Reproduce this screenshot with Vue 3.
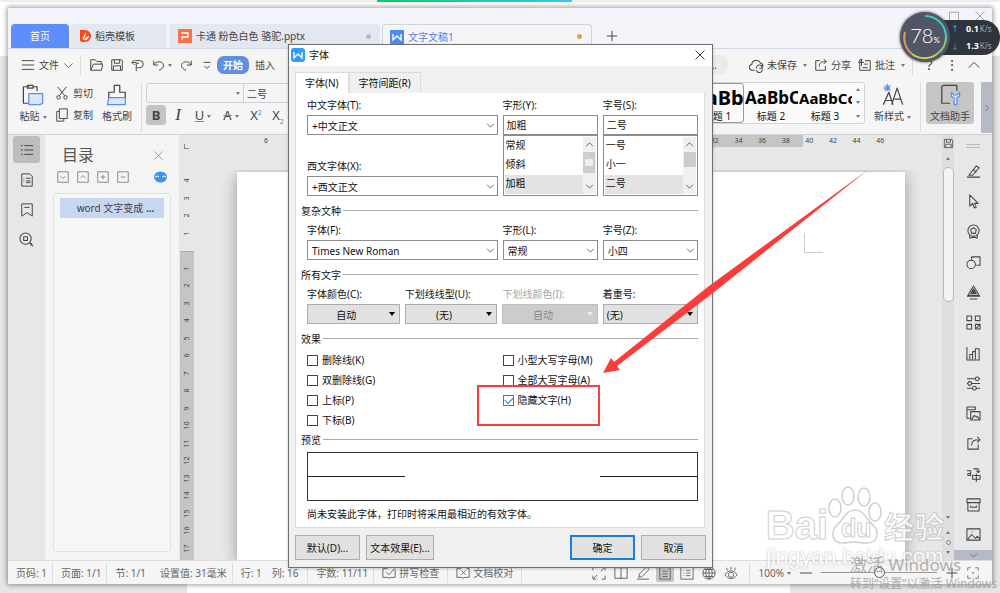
<template>
  <div class="desktop">
    <div class="progress"></div>
    <div class="app-window">
      <!-- Document tabs -->
      <header class="tab-bar">
        <button class="tab home">首页</button>
        <button class="tab docer">
          <svg width="11" height="14" viewBox="0 0 11 14"><path d="M0 1h5a6 6 0 0 1 0 12H2a2 2 0 0 1-2-2z" fill="#f8481c"/><path d="M3 11c-1-3 1-4 3-8 0 3-1 5-3 8zm1 0c2 1 5-1 5-4-2 0-4 2-5 4z" fill="#fff"/></svg>
          <span>稻壳模板</span>
        </button>
        <button class="tab ppt">
          <svg width="14" height="14" viewBox="0 0 14 14"><path d="M0 0h14v14H0z" fill="#fa7049"/><path d="M3 4h7v4H4v3" fill="none" stroke="#fff" stroke-width="1.3"/></svg>
          <span>卡通 粉色白色 骆驼.pptx</span>
          <i class="dot"></i>
        </button>
        <button class="tab current">
          <svg width="14" height="14" viewBox="0 0 14 14"><path d="M0 0h14v14H0z" fill="#4c8cf0"/><path d="M3 4v6l4-4 4 4V4" fill="none" stroke="#fff" stroke-width="1.3"/></svg>
          <span>文字文稿1</span>
          <i class="dot orange"></i>
        </button>
        <button class="new-tab" aria-label="新建"><Icon name="plus" :size="14" /></button>
        <div class="window-controls">
          <button aria-label="最大化"><Icon name="square" :size="12" /></button>
          <button aria-label="关闭"><Icon name="close" :size="12" /></button>
        </div>
      </header>

      <!-- Menu -->
      <nav class="menu-bar">
        <button class="file"><Icon name="menu" :size="14" /><span>文件</span><Icon name="down" :size="11" /></button>
        <span class="line"></span>
        <div class="quick">
          <button v-for="name in quick" :key="name" :aria-label="name"><Icon :name="name" :size="14" /><i v-if="name === 'undo'" class="caret"></i></button>
        </div>
        <button class="active-menu">开始</button>
        <button>插入</button>
        <div class="menu-right">
          <button class="search">汇...</button>
          <button><Icon name="cloud" :size="15" />未保存<i class="caret"></i></button>
          <button><Icon name="share" :size="14" />分享</button>
          <button><Icon name="note" :size="14" />批注<i class="caret"></i></button>
          <span class="line"></span>
          <button class="mark">?</button>
          <button class="mark">⋮</button>
          <button class="mark"><Icon name="up" :size="14" /></button>
        </div>
      </nav>

      <!-- Ribbon -->
      <section class="ribbon">
        <button class="big paste"><Icon name="paste" :size="22" /><span>粘贴<i class="caret"></i></span></button>
        <div class="stack">
          <button><Icon name="cut" :size="14" />剪切</button>
          <button><Icon name="copy" :size="14" />复制</button>
        </div>
        <button class="big brush"><Icon name="brush" :size="22" /><span>格式刷</span></button>
        <span class="line tall"></span>
        <div class="font-tools">
          <div class="font-boxes">
            <select class="font-name" aria-label="字体"><option></option></select>
            <i class="caret"></i>
            <select class="font-size" aria-label="字号"><option>二号</option></select>
          </div>
          <div class="format">
            <button class="on"><b>B</b></button>
            <button><em>I</em></button>
            <button class="with-caret"><u>U</u><i class="caret"></i></button>
            <button class="with-caret"><s>A</s><i class="caret"></i></button>
            <button>X<sup>2</sup></button>
            <button>X<sub>2</sub></button>
          </div>
        </div>
        <div class="ribbon-right">
          <div class="gallery">
            <button v-for="(s, i) in styles" :key="s.name" :class="['style', s.size, { chosen: i === 0 }]">
              <strong>{{ s.sample }}</strong><span>{{ s.name }}</span>
            </button>
            <div class="gallery-scroll"><i class="caret flip"></i><i class="caret"></i><i class="caret more"></i></div>
          </div>
          <button class="big new-style"><Icon name="letters" :size="22" /><span>新样式<i class="caret"></i></span></button>
          <span class="line tall"></span>
          <button class="big helper"><Icon name="helper" :size="22" /><span>文档助手</span></button>
          <button class="strip" aria-label="更多"><Icon name="right" :size="8" /></button>
        </div>
      </section>

      <!-- Workspace -->
      <main class="workspace">
        <aside class="side">
          <button class="on" aria-label="目录"><Icon name="list" :size="14" /></button>
          <button aria-label="章节"><Icon name="doc" :size="14" /></button>
          <button aria-label="书签"><Icon name="bookmark" :size="14" /></button>
          <button aria-label="查找"><Icon name="find" :size="15" /></button>
        </aside>
        <aside class="outline">
          <div class="outline-head"><h2>目录</h2><button aria-label="关闭目录"><Icon name="close" :size="11" /></button></div>
          <div class="outline-tools">
            <button v-for="n in ['boxDown', 'boxUp', 'boxPlus', 'boxMinus']" :key="n" :aria-label="n"><Icon :name="n" :size="12" /></button>
            <svg class="smart" width="13" height="12" viewBox="0 0 13 12"><ellipse cx="6.500" cy="6" rx="6.500" ry="5.500" fill="#3d93f0"/><path d="M1 6l2-1 2 1M8 6l2-1 2 1" fill="none" stroke="#fff"/></svg>
          </div>
          <div class="outline-list"><button>word 文字变成 <b>...</b></button></div>
        </aside>
        <div class="v-ruler">
          <span class="corner"></span>
          <div class="v-top"><span v-for="n in [4, 3, 2, 1]" :key="n">{{ n }}</span></div>
          <div class="v-main"><span v-for="n in 17" :key="n">{{ n }}</span></div>
        </div>
        <div class="canvas">
          <div class="h-ruler">
            <span class="first">6</span>
            <div class="h-numbers"><span v-for="n in [32, 34, 36, 38, 40, 42, 44, 46]" :key="n">{{ n }}</span></div>
          </div>
          <div class="page"><i class="page-corner"></i></div>
        </div>
        <div class="scroll">
          <Icon name="save" :size="11" />
          <i class="caret flip"></i>
          <div class="thumb"></div>
          <div class="scroll-end"><i class="caret"></i><i class="caret flip"></i><i class="ring"></i><i class="caret"></i></div>
        </div>
        <aside class="rail">
          <i class="grip"></i>
          <button v-for="n in rail" :key="n" :aria-label="n"><Icon :name="n" :size="15" /></button>
          <button class="rail-more" aria-label="展开"><Icon name="down" :size="9" /></button>
        </aside>
      </main>

      <!-- Status -->
      <footer class="status">
        <span class="cell">页码: 1</span>
        <span class="cell">页面: 1/1</span>
        <span class="cell wide"><span>节: 1/1</span><span>设置值: 31毫米</span></span>
        <span class="cell cursor"><span>行: 1</span><span>列: 16</span></span>
        <span class="cell">字数: 11/11</span>
        <button class="cell"><Icon name="spell" :size="14" />拼写检查</button>
        <button class="cell"><Icon name="proof" :size="14" />文档校对</button>
        <div class="status-right">
          <button v-for="n in views" :key="n" :class="['view', { on: n === 'pageView' }]" :aria-label="n"><Icon :name="n" :size="14" /></button>
          <span class="line"></span>
          <button class="zoom">100%<i class="caret"></i></button>
          <button class="step" aria-label="缩小"><Icon name="minus" :size="14" /></button>
          <input type="range" min="0" max="100" value="50" aria-label="缩放">
          <button class="step" aria-label="放大"><Icon name="plus" :size="14" /></button>
          <button class="fit" aria-label="适应"><Icon name="fit" :size="12" /></button>
        </div>
      </footer>
    </div>

    <!-- Font dialog -->
    <form class="dialog" role="dialog" aria-label="字体" @submit.prevent>
      <div class="dialog-title">
        <svg width="14" height="14" viewBox="0 0 14 14"><rect width="14" height="14" rx="3" fill="#2f9cfb"/><path d="M3 4v6l4-4 4 4V4" fill="none" stroke="#fff" stroke-width="1.300"/></svg>
        <span>字体</span>
        <button type="button" aria-label="关闭"><Icon name="close" :size="12" /></button>
      </div>
      <div class="dialog-tabs">
        <button type="button" class="on">字体(N)</button>
        <button type="button">字符间距(R)</button>
      </div>
      <div class="panel">
        <div class="columns">
          <div class="families">
            <label for="cn">中文字体(T):</label>
            <div class="pick"><select id="cn"><option>+中文正文</option></select><Icon name="down" :size="9" /></div>
            <label for="en" class="second">西文字体(X):</label>
            <div class="pick"><select id="en"><option>+西文正文</option></select><Icon name="down" :size="9" /></div>
          </div>
          <div v-for="l in lists" :key="l.id">
            <label :for="l.id">{{ l.label }}</label>
            <input :id="l.id" v-model="l.value" type="text">
            <div class="list">
              <select v-model="l.value" size="3" :aria-label="l.label">
                <option v-for="o in l.options" :key="o" :value="o" :class="{ picked: o === l.value }">{{ o }}</option>
              </select>
              <div class="list-scroll"><Icon name="up" :size="9" /><i :class="l.id"></i><Icon name="down" :size="9" /></div>
            </div>
          </div>
        </div>

        <h3>复杂文种</h3>
        <div class="columns">
          <div v-for="c in complex" :key="c.id">
            <label :for="c.id">{{ c.label }}</label>
            <div class="pick"><select :id="c.id"><option>{{ c.value }}</option></select><Icon name="down" :size="9" /></div>
          </div>
        </div>

        <h3>所有文字</h3>
        <div class="columns four">
          <div v-for="a in allText" :key="a.id" :class="{ off: a.disabled }">
            <label :for="a.id">{{ a.label }}</label>
            <div class="pick gray">
              <select :id="a.id" :disabled="a.disabled" :class="{ left: a.left }"><option>{{ a.value }}</option></select>
              <i class="caret"></i>
            </div>
          </div>
        </div>

        <h3>效果</h3>
        <div class="effects">
          <div v-for="(col, i) in effects" :key="i">
            <label v-for="e in col" :key="e.label"><input v-model="e.on" type="checkbox">{{ e.label }}</label>
          </div>
        </div>

        <h3 class="preview-title">预览</h3>
        <div class="preview"><i></i><i></i></div>
        <p>尚未安装此字体，打印时将采用最相近的有效字体。</p>
      </div>
      <div class="dialog-foot">
        <button type="button">默认(D)...</button>
        <button type="button">文本效果(E)...</button>
        <button type="submit" class="ok">确定</button>
        <button type="button">取消</button>
      </div>
    </form>

    <!-- Annotations -->
    <div class="mark-box"></div>
    <svg class="arrow" width="268" height="206" viewBox="0 0 268 206">
      <path d="M1 205L9 190l3 4L107 118 267 1 111 125 15 198l3 4z" fill="#fb3c3a"/>
    </svg>

    <!-- Network monitor -->
    <div class="monitor">
      <div class="speeds">
        <span><i class="blue">↑</i><b>0.1</b>K/s</span>
        <span><i class="green">↓</i><b>1.3</b>K/s</span>
      </div>
      <div class="gauge">
        <svg width="50" height="50" viewBox="0 0 50 50" fill="none" stroke-width="2">
          <path d="M25 4a21 21 0 0 1 21 21" stroke="#45c8c0"/>
          <path d="M46 25a21 21 0 0 1-9 17" stroke="#84cf74"/>
          <path d="M37 42a21 21 0 0 1-25 0" stroke="#cfd04e"/>
          <path d="M12 42A21 21 0 0 1 5 20" stroke="#e09a4a"/>
        </svg>
        <span>78<small>%</small></span>
      </div>
    </div>

    <!-- Watermarks -->
    <div class="baidu">
      <div class="baidu-logo">
        <span>Bai</span>
        <svg width="56" height="58" viewBox="0 0 56 58" fill="#fff" stroke="#c4c4c4" stroke-width="1.500">
          <ellipse cx="7" cy="22" rx="6" ry="9"/><ellipse cx="20" cy="10" rx="6" ry="9"/><ellipse cx="36" cy="11" rx="6" ry="9"/><ellipse cx="47" cy="26" rx="6" ry="9"/>
          <path d="M27 24c9 0 11 9 18 15 8 8 4 18-6 18-6 0-8-1-13-1s-7 1-12 1C4 57 2 46 9 39c7-6 9-15 18-15z"/>
          <text x="13" y="51" font-family="Liberation Sans" font-size="25" font-weight="bold" stroke-width="1">du</text>
        </svg>
        <span class="cjk">经验</span>
      </div>
      <span class="baidu-url">jingyan.baidu.com</span>
    </div>
    <div class="activate"><span>激活 Windows</span><small>转到“设置”以激活 Windows</small></div>
  </div>
</template>

<script setup>
import { h, reactive } from 'vue'

const paths = {
  menu: 'M1 3h14M1 8h14M1 13h14',
  down: 'M2 5l6 6 6-6',
  up: 'M2 11l6-6 6 6',
  right: 'M5 2l6 6-6 6',
  close: 'M2 2l12 12M14 2L2 14',
  plus: 'M8 2v12M2 8h12',
  minus: 'M1 8h14',
  square: 'M2 3h12v11H2z',
  open: 'M2 14V2h5l2 2h5v3M2 14l3-7h11l-2 7z',
  save: 'M2 2h11l1 1v11H2zM5 2v4h6V2M4 14V9h8v5',
  output: 'M5 3h5a4 4 0 0 1 0 8H7M9 6H6v9M1 5h5M4 2l-3 3 3 3',
  undo: 'M2 3v5h5M2 8c3-6 12-4 11 1 0 2-2 4-5 5',
  redo: 'M14 3v5H9M14 8C11 2 2 4 3 9c0 2 2 4 5 5',
  more: 'M4 5h8M5 9l3 3 3-3',
  cloud: 'M6 13H4a3 3 0 0 1-1-6c0-5 7-6 9-2 3 1 3 3 3 4M8 11a3 3 0 0 1 6-1M14 8v3h-3M14 12a3 3 0 0 1-6 1',
  share: 'M7 3H2v11h11V9M6 10c0-5 3-6 8-6M11 1l3 3-3 3',
  note: 'M5 2H2v12h12V3H8M0 5h7M4 1v8M7 7h4M5 11h6',
  cut: 'M3 1l8 10M13 1L5 11M6 13a2 2 0 1 1-4 0 2 2 0 0 1 4 0M14 13a2 2 0 1 1-4 0 2 2 0 0 1 4 0',
  copy: 'M5 1h9v11H5zM5 4H2v11h8v-3',
  list: 'M5 3h10M5 8h10M5 13h10M1 3h2M1 8h2M1 13h2',
  doc: 'M2 1h9l3 3v11H2zM4 6h1M7 6h5M4 9h1M7 9h5M7 11h5',
  bookmark: 'M2 1h12v14l-6-4-6 4zM5 5h6',
  find: 'M13 7A6 6 0 1 1 1 7a6 6 0 0 1 12 0M11 11l4 4M5 5h4v4H5zM12 14l2-2',
  boxDown: 'M1 1h14v14H1zM5 7l3 3 3-3',
  boxUp: 'M1 1h14v14H1zM5 9l3-3 3 3',
  boxPlus: 'M1 1h14v14H1zM5 8h6M8 5v6',
  boxMinus: 'M1 1h14v14H1zM5 8h6',
  pen: 'M1 14h14M3 12l8-10 3 2-7 8zM8 6l3 3',
  pointer: 'M4 1v12l3-3 2 5 2-1-2-4h4z',
  badge: 'M14 7A6 6 0 1 1 2 7a6 6 0 0 1 12 0M8 4l3 2-1 4H6L5 6zM4 12v3l4-1 4 1v-3',
  shapes: 'M6 5V2h9v9h-4M10 10a4.500 4.500 0 1 1-9 0 4.500 4.500 0 0 1 9 0',
  warn: 'M8 1L2 11h12zM8 4l-3 5h6zM8 6l-1 2h2zM1 12h14M4 15h8',
  grid: 'M1 1h5v5H1zM10 1h5v5h-5zM1 10h5v5H1zM10 10h5v5h-5zM11 14l4-4',
  chart: 'M1 1v14h14M4 14v-5h3v5M7 9V6h3v8M10 6V3h4v11',
  sliders: 'M1 3h9M14 3h1M14 3a2 2 0 1 1-4 0 2 2 0 0 1 4 0M1 8h1M6 8h9M6 8a2 2 0 1 1-4 0 2 2 0 0 1 4 0M1 13h6M11 13h4M11 13a2 2 0 1 1-4 0 2 2 0 0 1 4 0',
  gallery: 'M4 13H1V1h9v3M1 4h9M5 6h10v9H5zM6 14l3-4 2 2 1-1 2 3',
  exportIcon: 'M7 3H2v11h11V9M6 10c0-5 3-6 8-6M12 1l3 3-3 3',
  translate: 'M1 4h4v5H2V7h3M8 2h5v4M11 4l2 2 2-2M7 9h8v4H7zM11 7v9',
  archive: 'M1 2h14v4H1zM2 6v9h12V6M5 9v2h6V9',
  picture: 'M1 2h14v12H1zM2 13l4-5 4 4 2-2 3 3M6 5h1',
  spell: 'M7 4L6 3H1v10h5l2 1 2-1h5V3M5 7l3 3 6-7',
  proof: 'M6 3H1v10h5l2 1 2-1h5V3h-3M6 5l5 5M11 5l-5 5',
  expand: 'M1 5V1h4M11 1h4v4M15 11v4h-4M5 15H1v-4M10 6l4-4M6 10l-4 4',
  book: 'M8 2H1v12h14V2zM8 2v13',
  edit: 'M1 15h14M3 13l1-4 8-8 3 3-8 8z',
  pageView: 'M2 1h9l3 3v11H2zM5 6h6M5 9h6M5 12h6',
  outlineView: 'M1 1h14v14H1zM4 5h1M7 5h5M4 8h1M7 8h5M4 11h1M7 11h5',
  web: 'M15 8A7 7 0 1 1 1 8a7 7 0 0 1 14 0M1 8h14M8 1v14M3 4h10M3 12h10M8 1c-5 4-5 10 0 14M8 1c5 4 5 10 0 14',
  eye: 'M1 10c4-6 10-6 14 0-4 6-10 6-14 0M11 10a3 3 0 1 1-6 0 3 3 0 0 1 6 0M8 1v3M3 2l1 3M13 2l-1 3',
  fit: 'M1 5V1h4M11 1h4v4M15 11v4h-4M5 15H1v-4M7 8h2M8 7v2'
}

// two-colour icons keep a dark part and a blue part
const toned = {
  paste: ['M5 2H1v12h4M11 5V2H8M4 1h4v2H4z', 'M5 7h10v7l-2 1H5z'],
  brush: ['M6 6V1h4v5h4v4H2V6z', 'M2 10h12v5H1z'],
  letters: ['M1 15l4-9 3 9M3 12h4M7 15l4-12 4 12M9 11h5', 'M4 0v5M1 3h5M2 1l4 4M6 1L2 5'],
  helper: ['M8 14H2V2l1-1h10v4', 'M9 6v3l2 1v5h2v-5l2-1V6l-2 2h-2z']
}

const Icon = (props) => {
  const parts = toned[props.name] ?? [paths[props.name]]
  return h('svg', {
    width: props.size,
    height: props.size,
    viewBox: '0 0 16 16',
    fill: 'none',
    stroke: 'currentColor',
    'stroke-width': props.size > 18 ? 0.9 : 1.1,
    'stroke-linejoin': 'round'
  }, parts.map((d, i) => h('path', i ? { d, stroke: '#5c8fe6', fill: props.name === 'letters' ? 'none' : '#dbe8fb' } : { d })))
}
Icon.props = ['name', 'size']

const quick = ['open', 'save', 'output', 'undo', 'redo', 'more']
const rail = ['pen', 'pointer', 'badge', 'shapes', 'warn', 'grid', 'chart', 'sliders', 'gallery', 'exportIcon', 'translate', 'archive', 'picture']
const views = ['expand', 'book', 'edit', 'pageView', 'outlineView', 'web', 'eye']
const styles = [
  { name: '标题 1', sample: 'AaBb', size: 'xl' },
  { name: '标题 2', sample: 'AaBbC', size: 'lg' },
  { name: '标题 3', sample: 'AaBbCc', size: 'md' }
]

const lists = reactive([
  { id: 'shape', label: '字形(Y):', value: '加粗', options: ['常规', '倾斜', '加粗'] },
  { id: 'points', label: '字号(S):', value: '二号', options: ['一号', '小一', '二号'] }
])
const complex = [
  { id: 'cf', label: '字体(F):', value: 'Times New Roman' },
  { id: 'cl', label: '字形(L):', value: '常规' },
  { id: 'cz', label: '字号(Z):', value: '小四' }
]
const allText = [
  { id: 'color', label: '字体颜色(C):', value: '自动' },
  { id: 'uline', label: '下划线线型(U):', value: '(无)' },
  { id: 'ucolor', label: '下划线颜色(I):', value: '自动', disabled: true },
  { id: 'dots', label: '着重号:', value: '(无)', left: true }
]
const effects = reactive([
  [
    { label: '删除线(K)', on: false },
    { label: '双删除线(G)', on: false },
    { label: '上标(P)', on: false },
    { label: '下标(B)', on: false }
  ],
  [
    { label: '小型大写字母(M)', on: false },
    { label: '全部大写字母(A)', on: false },
    { label: '隐藏文字(H)', on: true }
  ]
])
</script>

<style>
body {
  margin: 0;
}
</style>

<style scoped>
* {
  box-sizing: border-box;
}

.desktop {
  position: relative;
  display: flex;
  flex-direction: column;
  min-height: 100vh;
  padding: 8px 8px 9px;
  overflow: hidden;
  font-family: "Noto Sans", "Noto Sans CJK SC", sans-serif;
  font-size: 10px;
  line-height: 20px;
  color: #444;
  background:
    linear-gradient(#fff, #fff) 187px 100% / 603px 9px no-repeat,
    linear-gradient(#eee 2px, #fff 2px, #fff 56px, #e6e6e6 56px);
}

button, select, input {
  font: inherit;
  color: inherit;
  margin: 0;
  padding: 0;
  border: 0;
  background: none;
  border-radius: 0;
  white-space: nowrap;
}

select {
  appearance: none;
  outline: none;
}

svg {
  flex: none;
  display: block;
}

.progress {
  position: absolute;
  top: 0;
  left: 377px;
  width: 195px;
  height: 2px;
  background: linear-gradient(90deg, #0ccb62, #3cc3ee);
}

.app-window {
  flex: 1;
  display: flex;
  flex-direction: column;
  background: #f5f5f5;
  box-shadow: 0 0 5px 1px rgba(0, 0, 0, 0.4);
}

.caret {
  display: inline-block;
  border: 2px solid transparent;
  border-top: 3px solid #777;
  border-bottom: 0;
  margin-left: 3px;
  vertical-align: middle;
}

.caret.flip {
  transform: rotate(180deg);
}

.line {
  width: 1px;
  height: 20px;
  background: #ddd;
}

.line.tall {
  height: 50px;
}

/* Tabs */
.tab-bar {
  display: flex;
  align-items: flex-end;
  gap: 2px;
  height: 41px;
  padding-left: 3px;
  background: #f2f4f9;
  border-bottom: 1px solid #d0d9e6;
}

.tab {
  display: flex;
  align-items: center;
  gap: 4px;
  height: 24px;
  padding: 0 9px;
  border-radius: 4px 4px 0 0;
  background: #e2e7f0;
}

.tab.home {
  width: 58px;
  justify-content: center;
  background: #5f8dfa;
  color: #fff;
}

.tab.docer {
  width: 96px;
}

.tab.ppt {
  width: 211px;
}

.tab.current {
  width: 210px;
  padding: 0 9px 0 7px;
  border: 1px solid #ccd4e0;
  border-bottom: 0;
  background: #f5f5f7;
  color: #4b83e8;
}

.dot {
  width: 5px;
  height: 5px;
  margin-left: auto;
  border-radius: 50%;
  background: #b7bcc6;
}

.dot.orange {
  background: #e89a4d;
}

.new-tab {
  height: 24px;
  padding: 0 11px;
}

.window-controls {
  display: flex;
  gap: 14px;
  align-self: flex-start;
  margin: 2px 6px 0 auto;
  color: #999;
}

/* Menu */
.menu-bar {
  display: flex;
  align-items: center;
  height: 32px;
  padding-left: 13px;
}

.file {
  display: flex;
  align-items: center;
  gap: 4px;
  margin-right: 6px;
}

.quick {
  display: flex;
  gap: 7px;
  padding: 0 3px 0 8px;
}

.quick button {
  display: flex;
  align-items: center;
}

.quick .caret {
  margin-left: 2px;
}

.menu-bar .active-menu {
  width: 32px;
  height: 18px;
  margin-right: 6px;
  border-radius: 7px;
  background: #5e8fe2;
  color: #fff;
  font-weight: bold;
  line-height: 18px;
}

.menu-right {
  display: flex;
  align-items: center;
  gap: 7px;
  margin-left: auto;
  padding-right: 13px;
}

.menu-right button {
  display: flex;
  align-items: center;
  gap: 3px;
}

.menu-right .search {
  width: 40px;
  justify-content: flex-end;
  padding-right: 11px;
  margin-right: 14px;
  border-radius: 9px;
  background: #ebebeb;
}

.menu-right .mark {
  width: 11px;
  margin-left: 4px;
  justify-content: center;
  font-size: 14px;
}

/* Ribbon */
.ribbon {
  display: flex;
  align-items: flex-start;
  height: 54px;
  padding: 1px 0 0 9px;
  border-bottom: 1px solid #d2d2d2;
}

.big {
  display: flex;
  flex-direction: column;
  align-items: center;
  gap: 2px;
  height: 42px;
  padding-top: 2px;
  line-height: 16px;
}

.paste {
  width: 32px;
}

.stack {
  padding-left: 6px;
}

.stack button {
  display: flex;
  align-items: center;
  gap: 4px;
  height: 22px;
}

.brush {
  width: 48px;
}

.font-tools {
  padding: 1px 0 0 4px;
}

.font-boxes {
  display: flex;
  align-items: center;
  width: 144px;
  height: 20px;
  border: 1px solid #d0d0d0;
  border-radius: 3px;
}

.font-name {
  width: 86px;
}

.font-size {
  width: 44px;
  height: 18px;
  margin-left: 3px;
  padding-left: 3px;
  border-left: 1px solid #d0d0d0;
}

.format {
  display: flex;
  align-items: center;
  gap: 2px;
  height: 24px;
  font-size: 13px;
}

.format button {
  width: 20px;
  height: 20px;
}

.format .with-caret {
  width: 26px;
}

.format .on {
  border-radius: 3px;
  background: #c4c4c4;
}

.format em {
  font-family: "Liberation Serif", serif;
  font-size: 17px;
}

.format u {
  text-decoration-color: #5c8fe6;
}

.format s {
  text-decoration-color: #e06060;
}

.format sup,
.format sub {
  font-size: 7px;
  line-height: 0;
  color: #4f84e0;
}

.ribbon-right {
  display: flex;
  margin-left: auto;
}

.gallery {
  display: flex;
  height: 42px;
  border: 1px solid #d4d4d4;
  border-radius: 3px;
  background: #fafafa;
}

.style {
  width: 54px;
  overflow: hidden;
  color: #111;
}

.style strong {
  display: block;
  height: 26px;
  padding-left: 1px;
  overflow: hidden;
  text-align: left;
  line-height: 28px;
  color: #000;
}

.style span {
  display: block;
  line-height: 13px;
}

.style.chosen {
  border: 1px solid #999;
  border-radius: 3px;
}

.xl strong {
  font-size: 20px;
}

.lg strong {
  font-size: 17px;
}

.md strong {
  font-size: 15px;
}

.gallery-scroll {
  display: flex;
  flex-direction: column;
  align-items: center;
  justify-content: space-around;
  width: 12px;
}

.gallery-scroll .caret {
  margin: 0;
}

.new-style {
  width: 55px;
}

.helper {
  width: 48px;
  margin: 0 7px 0 5px;
  border-radius: 3px;
  background: #c5c5c5;
}

.strip {
  width: 11px;
  height: 51px;
  background: #b5bac5;
}

.strip svg {
  margin: 0 auto;
}

/* Workspace */
.workspace {
  flex: 1;
  display: flex;
  min-height: 0;
  background: #e7e7e7;
}

.side {
  display: flex;
  flex-direction: column;
  align-items: center;
  gap: 3px;
  width: 37px;
  padding-top: 1px;
}

.side button {
  display: grid;
  place-items: center;
  width: 27px;
  height: 27px;
}

.side .on {
  border-radius: 3px;
  background: #bdbdbd;
}

.outline {
  display: flex;
  flex-direction: column;
  width: 134px;
  padding: 8px;
  background: #f4f4f4;
}

.outline-head {
  display: flex;
  align-items: center;
  justify-content: space-between;
  padding: 0 7px 0 9px;
  color: #888;
}

.outline-head h2 {
  margin: 0;
  color: #555;
  font-size: 16px;
  font-weight: normal;
  line-height: 24px;
}

.outline-tools {
  display: flex;
  gap: 8px;
  align-items: center;
  height: 20px;
  padding: 0 4px;
  color: #777;
}

.outline-tools .smart {
  margin-left: auto;
}

.outline-list {
  flex: 1;
  margin-top: 6px;
  padding: 4px 6px;
  border: 1px solid #e2e2e2;
  border-radius: 3px;
  background: #f6f6f6;
}

.outline-list button {
  width: 100%;
  padding-left: 7px;
  background: #c7d6f1;
}

.v-ruler {
  display: flex;
  flex-direction: column;
  width: 14px;
  margin-left: 1px;
  font-size: 7px;
}

.corner {
  width: 5px;
  height: 5px;
  margin: 9px 4px 23px;
  border: 1px solid #888;
  border-width: 0 0 1px 1px;
}

.v-ruler div {
  display: flex;
  flex-direction: column;
}

.v-ruler div span {
  flex: 1;
  width: 14px;
  text-align: center;
  line-height: 14px;
  writing-mode: vertical-rl;
  transform: rotate(180deg);
}

.v-top {
  height: 70px;
}

.v-main {
  flex: 1;
  margin-top: 9px;
  padding: 8px 0 3px;
  border-top: 1px solid #aaa;
  background: #c5c5c5;
}

.canvas {
  flex: 1;
  display: flex;
  flex-direction: column;
  min-width: 0;
}

.h-ruler {
  display: flex;
  justify-content: space-between;
  height: 12px;
  padding: 0 50px 0 70px;
  font-size: 7px;
  line-height: 12px;
  background: linear-gradient(#c5c5c5, #c5c5c5) 95px 0 / 514px 12px no-repeat;
}

.h-numbers {
  display: flex;
  width: 189px;
}

.h-numbers span {
  flex: 1;
  text-align: center;
}

.page {
  flex: 1;
  margin: 25px 37px 0 43px;
  background: #fff;
  box-shadow: 0 3px 14px rgba(0, 0, 0, 0.35);
  clip-path: inset(-2px -20px 0 -20px);
}

.page-corner {
  display: block;
  width: 19px;
  height: 20px;
  margin: 61px 82px 0 auto;
  border: 1px solid #ccc;
  border-width: 0 0 1px 1px;
}

.scroll {
  display: flex;
  flex-direction: column;
  align-items: center;
  width: 12px;
  padding-top: 3px;
  background: #dedede;
}

.scroll .caret {
  margin: 8px 0 7px;
}

.thumb {
  width: 11px;
  height: 135px;
  border: 1px solid #bbb;
  border-radius: 5px;
  background: #f3f3f3;
}

.scroll-end {
  display: flex;
  flex-direction: column;
  align-items: center;
  margin-top: auto;
}

.scroll .scroll-end .caret {
  margin: 6px 0;
}

.ring {
  width: 5px;
  height: 5px;
  border: 1px solid #888;
  border-radius: 50%;
}

.rail {
  display: flex;
  flex-direction: column;
  align-items: center;
  width: 38px;
}

.rail button {
  flex: 1;
  display: grid;
  place-items: center;
  width: 100%;
}

.grip {
  width: 14px;
  height: 4px;
  margin: 9px 0 8px;
  border: 1px solid #bbb;
  border-width: 1px 0;
}

.rail .rail-more {
  flex: none;
  height: 10px;
  background: #b5bac5;
}

/* Status */
.status {
  display: flex;
  align-items: center;
  height: 24px;
  border-top: 1px solid #ddd;
  color: #666;
}

.cell {
  display: flex;
  align-items: center;
  gap: 3px;
  padding: 0 5px 0 8px;
  border-right: 1px solid #ddd;
}

button.cell {
  padding: 0 8px;
}

.cell.wide {
  gap: 14px;
}

.cell.cursor {
  gap: 10px;
  padding-right: 9px;
}

.status-right {
  display: flex;
  align-items: center;
  margin-left: auto;
  padding-right: 13px;
}

.view {
  display: grid;
  place-items: center;
  width: 18px;
  height: 18px;
  margin-right: 4px;
}

.view.on {
  border-radius: 2px;
  background: #c5c5c5;
}

.status-right .line {
  margin: 0 9px 0 5px;
}

.step {
  margin: 0 8px;
  color: #444;
}

input[type="range"] {
  appearance: none;
  width: 116px;
  height: 12px;
}

input[type="range"]::-webkit-slider-runnable-track {
  height: 1px;
  background: #999;
}

input[type="range"]::-webkit-slider-thumb {
  appearance: none;
  width: 11px;
  height: 11px;
  margin-top: -5px;
  border: 1px solid #555;
  border-radius: 50%;
  background: #f5f5f5;
}

/* Dialog */
.dialog {
  position: absolute;
  top: 44px;
  left: calc(50% - 212px);
  width: 425px;
  border: 1px solid #6f6f6f;
  background: #f0f0f0;
  color: #111;
  box-shadow: 0 1px 3px rgba(0, 0, 0, 0.2);
}

.dialog-title {
  display: flex;
  align-items: center;
  gap: 4px;
  height: 21px;
  padding: 0 6px 2px 2px;
  background: #fff;
}

.dialog-title button {
  margin-left: auto;
}

.dialog-tabs {
  display: flex;
  padding: 6px 6px 0;
}

.dialog-tabs button {
  height: 21px;
  padding: 0 9px;
  border: 1px solid #dcdcdc;
  border-bottom: 0;
}

.dialog-tabs .on {
  background: #fff;
}

.panel {
  margin: 0 7px 0 6px;
  padding: 2px 6px 3px 5px;
  border: 1px solid #dcdcdc;
  border-top: 0;
  background: #fff;
}

.columns {
  display: grid;
  grid-template-columns: 2fr 1fr 1fr;
  gap: 5px;
  padding-left: 6px;
}

.columns.four {
  grid-template-columns: 37fr 37fr 38fr 38fr;
}

.columns > div {
  min-width: 0;
}

.columns label {
  display: block;
  height: 20px;
  white-space: nowrap;
}

.columns .second {
  margin-top: 21px;
}

.pick {
  position: relative;
  height: 20px;
}

.pick select,
.columns input {
  display: block;
  width: 100%;
  height: 20px;
  padding: 0 4px;
  border: 1px solid #8c8c8c;
  background: #fff;
}

.columns input {
  padding: 0 3px;
}

.pick svg {
  position: absolute;
  right: 3px;
  top: 6px;
}

.pick.gray select {
  padding-right: 18px;
  background: #e1e1e1;
  border-color: #adadad;
  text-align-last: center;
}

.pick.gray .left {
  padding: 0 3px;
  text-align-last: left;
}

.pick.gray .caret {
  position: absolute;
  right: 5px;
  top: 8px;
  border-width: 4px 3px 0;
  border-top-color: #000;
}

.off label {
  color: #a5a5a5;
}

.pick.gray select:disabled {
  background: #ccc;
  border-color: #bfbfbf;
  color: #888;
  opacity: 1;
}

.off .pick .caret {
  border-top-color: #eee;
}

.list {
  display: flex;
  height: 61px;
  padding: 1px;
  border: 1px solid #8c8c8c;
}

.list select {
  flex: 1;
  min-width: 0;
  height: 59px;
  overflow: hidden;
  scrollbar-width: none;
}

.list option {
  min-height: 19px;
  padding: 0 1px;
  line-height: 19px;
  color: #111;
}

.list .picked {
  color: #111;
  background: linear-gradient(#e3e3e3, #e3e3e3);
}

.list-scroll {
  display: flex;
  flex-direction: column;
  align-items: center;
  width: 13px;
  padding: 3px 0;
  background: #f0f0f0;
}

.list-scroll i {
  width: 12px;
  height: 15px;
  margin: 3px 0 auto;
  background: #ccc;
}

.list-scroll .shape {
  height: 21px;
  border: 7px solid #ccc;
  border-width: 7px 2px;
  background: #eee;
}

h3 {
  display: flex;
  align-items: center;
  gap: 2px;
  height: 19px;
  margin: 5px 0 0;
  font-size: 10px;
  font-weight: normal;
}

h3::after {
  content: '';
  flex: 1;
  height: 1px;
  background: #aaa;
}

.effects {
  display: grid;
  grid-template-columns: 1fr 1fr;
  padding: 2px 0 0 6px;
}

.effects label {
  display: flex;
  align-items: center;
  gap: 4px;
  height: 20px;
}

.effects input {
  width: 11px;
  height: 11px;
  appearance: none;
  border: 1px solid #444;
  background: #fff;
}

.effects input:checked {
  border-color: #2480d0;
}

.effects input:checked::after {
  content: '';
  display: block;
  width: 7px;
  height: 4px;
  margin: 1px;
  border: 1px solid #2480d0;
  border-width: 0 0 1px 1px;
  transform: rotate(-45deg);
}

.panel .preview-title {
  margin-top: 0;
}

.preview {
  display: flex;
  align-items: center;
  justify-content: space-between;
  height: 49px;
  margin: 3px 0 0 6px;
  border: 1px solid #333;
}

.preview i {
  width: 25%;
  height: 1px;
  background: #222;
}

.panel p {
  margin: 3px 0 0 6px;
}

.dialog-foot {
  display: flex;
  gap: 6px;
  padding: 7px 6px 7px;
}

.dialog-foot button {
  width: 65px;
  height: 25px;
  border: 1px solid #adadad;
  background: #e1e1e1;
}

.dialog-foot button:nth-child(2) {
  width: 68px;
}

.dialog-foot .ok {
  margin-left: auto;
  border: 2px solid #1a7fd8;
}

/* Annotations */
.mark-box {
  position: absolute;
  top: 385px;
  left: calc(50% - 23px);
  width: 123px;
  height: 41px;
  border: 2px solid #fb3c3a;
}

.arrow {
  position: absolute;
  top: 168px;
  left: calc(50% + 102px);
}

/* Monitor */
.monitor {
  position: absolute;
  top: 12px;
  right: 0;
  width: 100px;
  height: 50px;
  color: #fff;
}

.gauge {
  position: absolute;
  top: 0;
  left: 0;
  display: grid;
  place-items: center;
  width: 50px;
  height: 50px;
  border-radius: 50%;
  background: #515667;
  box-shadow: 0 0 3px #333;
}

.gauge svg {
  position: absolute;
}

.gauge span {
  font-family: Lato, sans-serif;
  font-size: 20px;
  font-weight: 300;
}

.gauge small {
  font-size: 8px;
  font-weight: 400;
}

.speeds {
  display: flex;
  flex-direction: column;
  height: 35px;
  margin: 8px 0 0 25px;
  padding-left: 26px;
  border-radius: 0 17px 17px 0;
  background: #30343f;
  font-size: 8px;
  line-height: 17px;
  color: #aaa;
}

.speeds b {
  margin: 0 1px 0 7px;
  font-size: 9px;
  color: #fff;
}

.speeds i {
  font-style: normal;
}

.blue {
  color: #45b5ef;
}

.green {
  color: #37b84b;
}

/* Watermarks */
.baidu {
  position: absolute;
  right: 56px;
  bottom: 23px;
  opacity: 0.8;
  color: #fff;
  pointer-events: none;
}

.baidu-logo {
  display: flex;
  align-items: flex-end;
  font-family: "Liberation Sans", sans-serif;
  font-size: 40px;
  font-weight: bold;
  line-height: 38px;
  -webkit-text-stroke: 1px #c4c4c4;
}

.baidu-logo .cjk {
  font-family: "Noto Sans CJK SC", sans-serif;
  font-size: 30px;
}

.baidu-url {
  display: block;
  font-family: "Liberation Sans", sans-serif;
  font-size: 22px;
  line-height: 26px;
  text-align: center;
  text-shadow: 0 0 2px #999;
}

.activate {
  position: absolute;
  left: calc(50% + 350px);
  bottom: 0;
  display: flex;
  flex-direction: column;
  color: #999;
  opacity: 0.75;
  white-space: nowrap;
  pointer-events: none;
}

.activate span {
  font-size: 17px;
}

.activate small {
  font-size: 12px;
  line-height: 18px;
}
</style>
